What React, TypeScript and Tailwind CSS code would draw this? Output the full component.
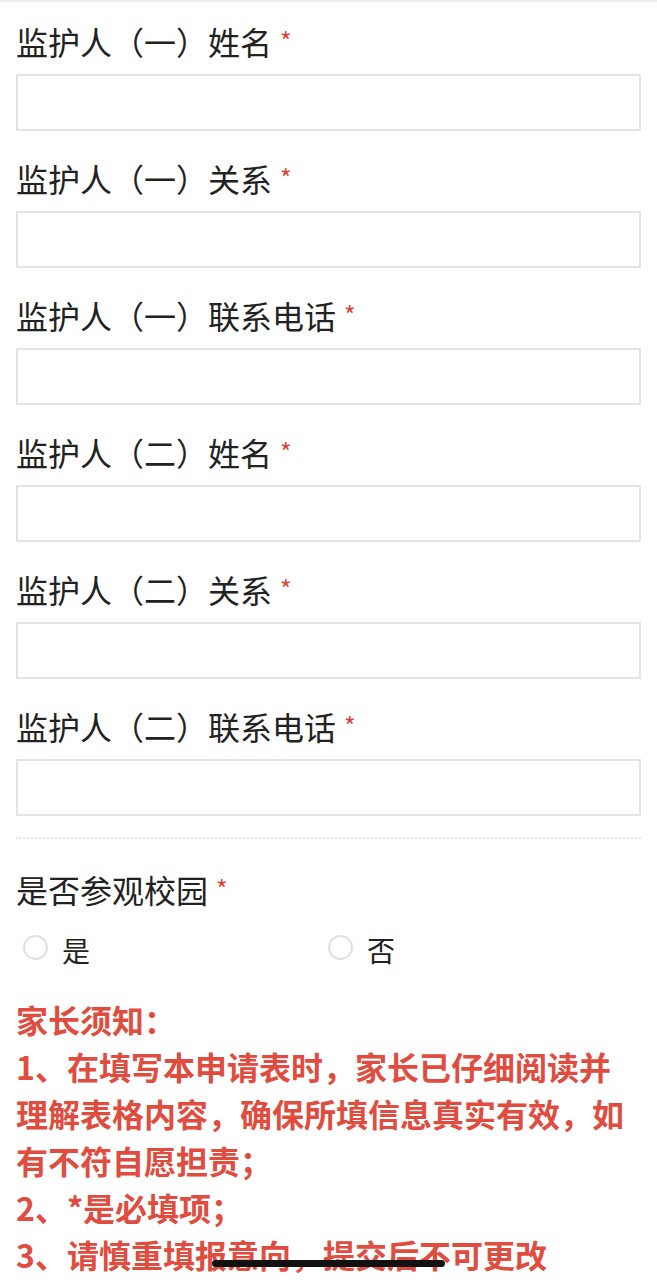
import React from 'react';

const fields = [
  '监护人（一）姓名',
  '监护人（一）关系',
  '监护人（一）联系电话',
  '监护人（二）姓名',
  '监护人（二）关系',
  '监护人（二）联系电话',
];

const notice = [
  '家长须知：',
  '1、在填写本申请表时，家长已仔细阅读并理解表格内容，确保所填信息真实有效，如有不符自愿担责；',
  '2、*是必填项；',
  '3、请慎重填报意向，提交后不可更改',
];

const Label: React.FC<{ text: string }> = ({ text }) => (
  <div className="h-[44px] leading-[44px] text-[32px] text-[#222222] whitespace-nowrap">
    {text}
    <span className="ml-[8px] text-[25px] text-[#d9473c] align-[4px]">*</span>
  </div>
);

export default function App() {
  return (
    <div
      className="relative min-h-screen bg-white border-t-2 border-[#ececec] px-4 pt-4 pb-2 overflow-hidden"
      style={{ fontFamily: '"Noto Sans CJK SC", "Noto Sans", sans-serif' }}
    >
      {fields.map((f) => (
        <div key={f} className="mb-6">
          <Label text={f} />
          <input
            type="text"
            className="mt-3 block w-full h-[57px] border-2 border-[#e4e4e4] bg-white outline-none"
          />
        </div>
      ))}

      <div className="-mt-[3px] border-t-2 border-dotted border-[#e4e4e4]" />

      <div className="mt-[27px]">
        <Label text="是否参观校园" />
        <div className="mt-5 flex h-[34px] items-center">
          {['是', '否'].map((o, i) => (
            <label key={o} className={`flex items-center ${i === 0 ? 'w-[312px] pl-[7px]' : ''}`}>
              <span className="block h-[25px] w-[25px] rounded-full border-2 border-[#e0e0e0] bg-white" />
              <span className="ml-[14px] text-[28px] leading-none text-[#222222] mt-[5px]">{o}</span>
            </label>
          ))}
        </div>
      </div>

      <div className="mt-8 text-[32px] leading-[47px] font-semibold text-[#e04d3f]">
        {notice.map((n) => (
          <p key={n}>{n}</p>
        ))}
      </div>

      <div className="fixed left-[212px] top-[1260px] h-[7px] w-[233px] rounded-full bg-[#111111]" />
    </div>
  );
}
